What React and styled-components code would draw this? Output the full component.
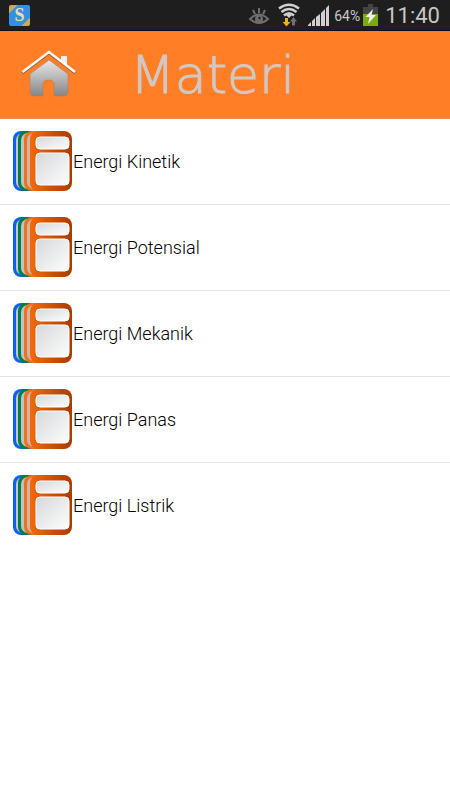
import React from 'react';
import styled, { createGlobalStyle } from 'styled-components';

const GlobalStyle = createGlobalStyle`
  * {
    box-sizing: border-box;
  }
  body {
    margin: 0;
    background: #fff;
    font-family: Roboto, "Noto Sans", sans-serif;
  }
`;

const StatusBar = styled.div`
  display: flex;
  align-items: center;
  justify-content: space-between;
  height: 31px;
  padding: 0 10px 0 9px;
  background: #1e1e1e;
  border-bottom: 1px solid #0c1020;
  color: #c8c8c8;
`;
const AppBadge = styled.div`
  display: flex;
  align-items: center;
  justify-content: center;
  width: 21px;
  height: 21px;
  border-radius: 2px;
  background: linear-gradient(135deg, #c9a860 20%, #3390e6 21%, #3390e6 79%, #c9a860 80%);
  color: #ecdcb0;
  font: bold 18px "Liberation Serif", serif;
`;
const StatusIcons = styled.div`
  display: flex;
  align-items: center;
`;
const Indicators = styled.div`
  display: flex;
  align-items: center;
  gap: 8px;
`;
const Battery = styled.span`
  padding-top: 2px;
  margin: 0 3px 0 4px;
  font-size: 14px;
  line-height: 18px;
`;
const Clock = styled.time`
  padding-top: 2px;
  margin-left: 7px;
  font-size: 22px;
  line-height: 28px;
`;

const Header = styled.header`
  display: flex;
  align-items: center;
  gap: 52px;
  height: 88px;
  padding: 0 20px;
  background: #ff7e26;
  border-bottom: 1px solid #f58a50;
`;
const HomeButton = styled.button`
  display: flex;
  padding: 0 0 2px;
  border: 0;
  background: none;
  cursor: pointer;
`;
const Title = styled.h1`
  margin: 0;
  color: #d2c8c3;
  font-family: "DejaVu Sans", "DejaVu Sans Light", sans-serif;
  font-size: 52px;
  font-weight: 200;
  line-height: 60px;
  -webkit-text-stroke: 1px #d2c8c3;
`;

const List = styled.ul`
  margin: 0;
  padding: 0;
  list-style: none;
`;
const Item = styled.li`
  border-bottom: 1px solid #e4e4e4;

  &:last-child {
    border-bottom: 0;
  }
`;
const ItemLink = styled.a`
  display: flex;
  align-items: center;
  padding: 12px 12px 13px;
  color: #000;
  font-size: 18px;
  font-weight: 300;
  line-height: 24px;
  text-decoration: none;
`;
const ItemLabel = styled.span`
  padding-top: 2px;
`;

const topics = [
  'Energi Kinetik',
  'Energi Potensial',
  'Energi Mekanik',
  'Energi Panas',
  'Energi Listrik',
];

function EyeIcon() {
  return (
    <svg width="22" height="20" viewBox="0 0 22 20" fill="none" stroke="#6e6e6e" strokeWidth="2" aria-hidden="true">
      <path d="M2 14Q11 5 20 14Q11 22 2 14Z" />
      <path d="M11 3v5M5 5l2 4M17 5l-2 4" />
      <circle cx="11" cy="14" r="3" fill="#6e6e6e" />
      <path d="M11 12l1 2" stroke="#1e1e1e" />
    </svg>
  );
}

function WifiIcon() {
  return (
    <svg width="22" height="24" viewBox="0 0 22 24" fill="none" aria-hidden="true">
      <g stroke="#d0d0d0" strokeWidth="2.500">
        <path d="M1 5.500Q11 -2 21 5.500" />
        <path d="M3.500 9Q11 3 18.500 9" />
        <path d="M6 12.500Q11 8 16 12.500" />
      </g>
      <path d="M8 12L11 15L14 12Q11 10 8 12z" fill="#d0d0d0" />
      <path d="M7 15h3v4h2.500l-4 4.500l-4 -4.500H7z" fill="#e5b51a" />
      <path d="M14 22.500h3v-4h2l-3.500 -4.500l-3.500 4.500h2z" fill="#707070" />
    </svg>
  );
}

function SignalIcon() {
  return (
    <svg width="22" height="21" viewBox="0 0 22 21" fill="#d0d0d0" aria-hidden="true">
      <path d="M0 21v-1l3-3v4zM4 21v-5l3-3v8zM8 21v-9l4-3v12zM13 21v-13l4-4v17zM18 21v-18l3-3v21z" />
    </svg>
  );
}

function BatteryIcon() {
  return (
    <svg width="15" height="22" viewBox="0 0 15 22" aria-hidden="true">
      <path d="M5 0h5v3h5v8H0V3h5z" fill="#444" />
      <path d="M0 10h15v12H0z" fill="#7cac0c" />
      <path d="M10 5L2.500 13h4L5 20l8-9H8.500z" fill="#eee" />
    </svg>
  );
}

function HomeIcon() {
  return (
    <svg width="58" height="50" viewBox="0 0 58 50" aria-hidden="true">
      <defs>
        <linearGradient id="house" x1="0" y1="0" x2="0" y2="1">
          <stop offset="0" stopColor="#e8e8e8" />
          <stop offset="1" stopColor="#858585" />
        </linearGradient>
      </defs>
      <path d="M41 7h6v12l-6-5z" fill="#f0f0f0" />
      <path d="M29 11L48 25V43Q48 47 44 47H34V35Q34 31 28.500 31Q23 31 23 35V47H14Q10 47 10 43V25Z" fill="url(#house)" stroke="#a5846c" strokeWidth="0.600" />
      <path d="M2.500 24L29 4L55 24" fill="none" stroke="#8f5a36" strokeWidth="2.500" />
      <path d="M2.500 23L29 3L55 23" fill="none" stroke="#fff" strokeWidth="2.500" />
    </svg>
  );
}

function CardsIcon() {
  return (
    <svg width="61" height="60" viewBox="0 0 61 60" aria-hidden="true">
      <defs>
        <linearGradient id="card" x1="0" y1="0" x2="1" y2="0">
          <stop offset="0" stopColor="#f26a0c" />
          <stop offset="1" stopColor="#a83c00" />
        </linearGradient>
        <linearGradient id="panel" x1="0" y1="0" x2="1" y2="1">
          <stop offset="0" stopColor="#d6d8da" />
          <stop offset="1" stopColor="#fdfdfd" />
        </linearGradient>
      </defs>
      <rect x="1" y="0" width="42" height="60" rx="8" fill="#0c62ec" />
      <rect x="4" y="2" width="39" height="56" rx="7" fill="#c4c8d0" />
      <rect x="6" y="0" width="42" height="60" rx="8" fill="#067c46" />
      <rect x="9" y="2" width="39" height="56" rx="7" fill="#bcc4c0" />
      <rect x="12" y="0" width="42" height="60" rx="8" fill="#f07020" />
      <rect x="15" y="2" width="39" height="56" rx="7" fill="#d0b4a4" />
      <rect x="18" y="0" width="42" height="60" rx="8" fill="url(#card)" />
      <g fill="url(#panel)" stroke="#fff" strokeWidth="1">
        <rect x="24" y="6" width="33" height="12" rx="4" />
        <rect x="24" y="22" width="33" height="32" rx="4" />
      </g>
    </svg>
  );
}

export default function App() {
  return (
    <>
      <GlobalStyle />
      <StatusBar>
        <AppBadge>S</AppBadge>
        <StatusIcons>
          <Indicators>
            <EyeIcon />
            <WifiIcon />
            <SignalIcon />
          </Indicators>
          <Battery>64%</Battery>
          <BatteryIcon />
          <Clock>11:40</Clock>
        </StatusIcons>
      </StatusBar>
      <Header>
        <HomeButton aria-label="Home">
          <HomeIcon />
        </HomeButton>
        <Title>Materi</Title>
      </Header>
      <List>
        {topics.map((topic) => (
          <Item key={topic}>
            <ItemLink href="#">
              <CardsIcon />
              <ItemLabel>{topic}</ItemLabel>
            </ItemLink>
          </Item>
        ))}
      </List>
    </>
  );
}
